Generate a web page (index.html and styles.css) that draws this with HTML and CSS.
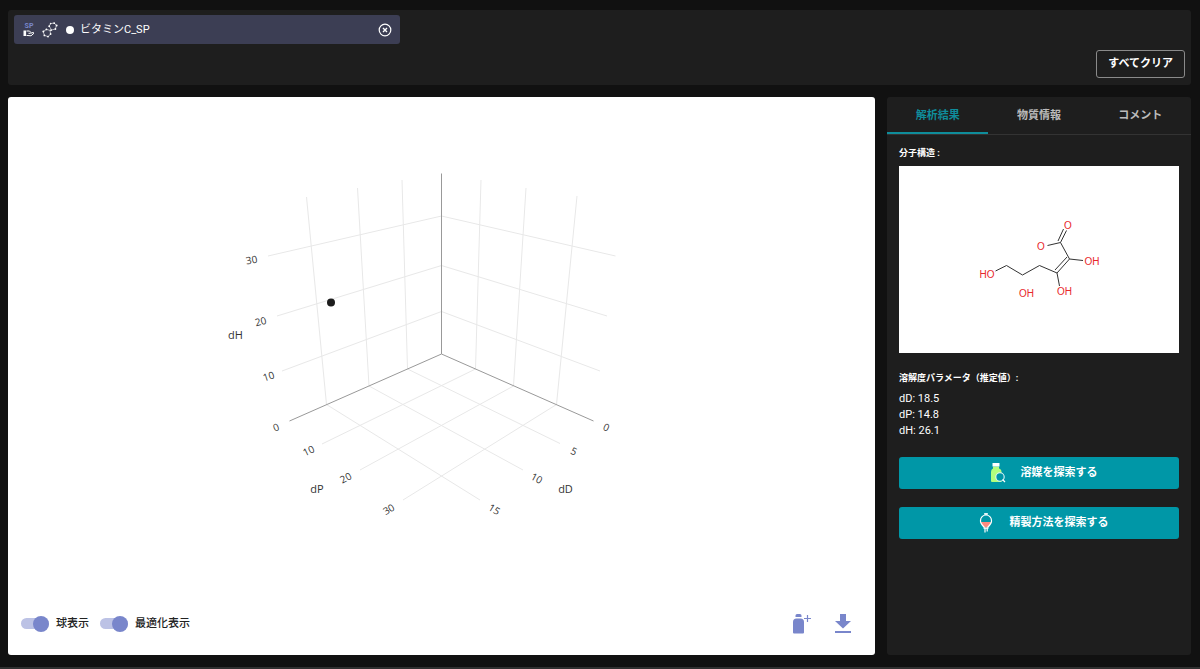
FILE: index.html
```html
<!DOCTYPE html>
<html lang="ja">
<head>
<meta charset="utf-8">
<meta name="viewport" content="width=device-width, initial-scale=1">
<title>ビタミンC_SP</title>
<link rel="stylesheet" href="styles.css">
</head>
<body>
<div class="app">
  <header class="selection">
    <div class="chip">
      <svg class="chip-hand" viewBox="0 0 12 16" aria-hidden="true">
        <text x="6" y="6" text-anchor="middle">SP</text>
        <path d="M0.5 8.500h2.600v5.500H0.500z" fill="#fff"/>
        <path d="M3.500 9h3l1.500 1.500-.8.800H5.500M7.800 11.300l2.400-.9.800.8-3 2.600-4.500-.4" fill="none" stroke="#fff" stroke-width="1"/>
      </svg>
      <svg class="chip-molecule" viewBox="0 0 16 16" aria-hidden="true">
        <path d="M7.200 4.200 8.600 1.600 12.200 1 14.400 3.400 13.400 7 9.600 8zM1.200 9.600 4.400 7.400 8 8.400 8.600 12 6 14.600 2.400 13.400z" fill="none" stroke="#fff" stroke-width=".6"/>
        <g fill="#fff"><circle cx="7.2" cy="4.2" r=".9"/><circle cx="8.600" cy="1.600" r=".8"/><circle cx="12.200" cy="1.200" r=".9"/><circle cx="14.600" cy="3.400" r="1"/><circle cx="13.400" cy="7" r=".9"/><circle cx="9" cy="8.200" r=".9"/><circle cx="4.400" cy="7.400" r=".9"/><circle cx="1.400" cy="9.600" r="1"/><circle cx="2.400" cy="13.400" r=".9"/><circle cx="6" cy="14.600" r=".9"/><circle cx="8.600" cy="12" r=".9"/></g>
      </svg>
      <span class="chip-dot"></span>
      <span class="chip-name">ビタミンC_SP</span>
      <button class="icon-button" type="button" aria-label="削除">
        <svg class="chip-close" viewBox="0 0 14 14"><g fill="none" stroke="#fff" stroke-width="1.200"><circle cx="7" cy="7" r="5.800"/><path d="m5 5 4 4m0-4L5 9" stroke-width="1.400"/></g></svg>
      </button>
    </div>
    <button class="clear" type="button">すべてクリア</button>
  </header>

  <div class="content">
    <main class="viewer">
      <svg class="plot" viewBox="8 97 867 495" role="img" aria-label="dD dP dH">
        <g class="grid">
          <path d="M306.500 197 326.500 404.500M357.500 188 369 386M402 180 407.500 369M481 180 475.500 369M526 188 513.500 386M577 196 556.500 404.500"/>
          <path d="M268 256 441.500 216 615.500 256M277 316 441.500 265.500 607 316M282 371 441.500 311.500 600 371"/>
          <path d="M475.500 369 322 444M513.500 386 360 470M556.500 404.500 403 500M407.500 369 560 443.500M369 386 523 470M326.500 404.500 480 500"/>
        </g>
        <path class="axis" d="M441.500 173.500V354M289.500 421 441.500 354 593.500 421"/>
        <circle cx="331" cy="302.500" r="4" fill="#1c1c1c"/>
        <g class="ticks">
          <text transform="translate(251.500 259.500) rotate(-10)" y="4">30</text>
          <text transform="translate(260.500 321) rotate(-14)" y="4">20</text>
          <text transform="translate(268.500 376) rotate(-18)" y="4">10</text>
          <text transform="translate(276 427) rotate(-22)" y="4">0</text>
          <text transform="translate(308.500 450.500) rotate(-26)" y="4">10</text>
          <text transform="translate(345.500 477.500) rotate(-28)" y="4">20</text>
          <text transform="translate(388.500 509) rotate(-31)" y="4">30</text>
          <text transform="translate(606.500 427) rotate(24)" y="4">0</text>
          <text transform="translate(574 451) rotate(26)" y="4">5</text>
          <text transform="translate(537 478) rotate(28)" y="4">10</text>
          <text transform="translate(494.500 509) rotate(31)" y="4">15</text>
        </g>
        <g class="axis-names"><text x="235.500" y="339">dH</text><text x="317" y="493">dP</text><text x="565.500" y="493">dD</text></g>
      </svg>
      <div class="tools">
        <label class="toggle"><input class="switch" type="checkbox" checked><span class="toggle-text">球表示</span></label>
        <label class="toggle"><input class="switch" type="checkbox" checked><span class="toggle-text">最適化表示</span></label>
        <div class="actions">
          <button class="icon-button" type="button" aria-label="溶媒を追加"><svg class="tool-icon" viewBox="0 0 20 20"><g fill="#7986cb"><path d="M3.500 3V1.500Q3.500 0 5 0h3q1.500 0 1.500 1.500V3zM1 8q0-3.500 3.500-3.500h4Q12 4.500 12 8v10.500q0 1-1 1H2q-1 0-1-1z"/></g><path d="M15.500 1v7M12 4.500h7" stroke="#7986cb" stroke-width="1.200"/></svg></button>
          <button class="icon-button" type="button" aria-label="ダウンロード"><svg class="tool-icon" viewBox="0 0 20 20"><path d="M7 0h6v7h5l-8 7.500L2 7h5zM2 17h16v2H2z" fill="#7986cb"/></svg></button>
        </div>
      </div>
    </main>

    <aside class="details">
      <div class="tabs" role="tablist">
        <button class="tab tab-active" type="button" role="tab" aria-selected="true">解析結果</button>
        <button class="tab" type="button" role="tab" aria-selected="false">物質情報</button>
        <button class="tab" type="button" role="tab" aria-selected="false">コメント</button>
      </div>
      <div class="results">
        <h2 class="heading">分子構造 :</h2>
        <svg class="molecule" viewBox="899 166 280 187" role="img" aria-label="分子構造">
          <path class="bond" d="M995.500 271 1006.500 265.500 1022.500 275 1039.500 265.500 1057 273 1069.500 259 1060.500 242.500 1047.500 245.500M1069.500 259 1083 260.500M1057 273 1059.500 286M1055 270 1067 257M1060.500 242.500 1066.500 230.500M1058 241 1063.500 229"/>
          <g class="atoms"><text x="1068" y="229">O</text><text x="1041" y="250">O</text><text x="1092" y="265">OH</text><text x="1064.500" y="295">OH</text><text x="1026.500" y="297">OH</text><text x="987" y="278">HO</text></g>
        </svg>
        <h2 class="heading">溶解度パラメータ（推定値）:</h2>
        <ul class="params"><li>dD: 18.5</li><li>dP: 14.8</li><li>dH: 26.1</li></ul>
        <button class="search" type="button">
          <svg class="search-icon" viewBox="0 0 20 20" aria-hidden="true"><path d="M6 3.500h6v2q2.500.5 2.500 3.500v10H5q-1 0-1-1V9Q4 6 6 5.500z" fill="#b2ff7d"/><path d="M5.500 0h7v3.500h-7z" fill="#fff"/><circle cx="13" cy="14" r="4.200" fill="#0097a7" stroke="#e0f7fa" stroke-width="1.100"/><path d="m15.500 16.500 2.500 2.500" stroke="#fff" stroke-width="1.200"/></svg>
          <span>溶媒を探索する</span>
        </button>
        <button class="search" type="button">
          <svg class="search-icon" viewBox="0 0 20 20" aria-hidden="true"><path d="M5 9h10q0 2-3.800 5.500H8.800Q5 11 5 9z" fill="#ff8a80"/><path d="M8 .8h4M10 0v2M8.500 14.500Q4 10 4.500 7.500a5.500 5.500 0 0 1 11 0Q16 10 11.500 14.500M7.500 15.200h5M9 15v4.500M11.200 15v3.500" fill="none" stroke="#fff" stroke-width="1.200"/></svg>
          <span>精製方法を探索する</span>
        </button>
      </div>
    </aside>
  </div>
</div>
</body>
</html>
```
FILE: styles.css
```css
* { box-sizing: border-box; }

body {
  margin: 0;
  background: #111;
  color: #fff;
  font: 11px/16px Roboto, "Noto Sans CJK JP", sans-serif;
}

button {
  margin: 0;
  padding: 0;
  border: 0;
  background: none;
  color: inherit;
  font: inherit;
  cursor: pointer;
}

svg { display: block; }

.app {
  display: flex;
  flex-direction: column;
  gap: 12px;
  min-height: 100vh;
  padding: 10px 9px 12px 8px;
  border-bottom: 2px solid #303030;
}

.selection {
  display: flex;
  flex-direction: column;
  gap: 6px;
  padding: 5px 6px 7px;
  border-radius: 3px;
  background: #1e1e1e;
}

.chip {
  display: flex;
  align-items: center;
  width: 33%;
  min-width: 240px;
  height: 29px;
  padding: 0 8px 0 9px;
  border-radius: 3px;
  background: #3c3e54;
}

.chip-hand { width: 12px; height: 16px; margin-right: 7px; }
.chip-hand text { fill: #7986cb; font-size: 7px; font-weight: 700; }
.chip-molecule { width: 16px; height: 16px; }
.chip-dot { width: 8px; height: 8px; margin: 0 6px 0 8px; border-radius: 50%; background: #fff; }
.chip-name { flex: 1; }
.chip-close { width: 14px; height: 14px; }

.clear {
  align-self: flex-end;
  height: 28px;
  padding: 0 11px;
  border: 1px solid #8a8a8a;
  border-radius: 3px;
  font-weight: 700;
}

.content {
  display: flex;
  flex: 1;
  gap: 12px;
}

.viewer {
  display: flex;
  flex: 1;
  flex-direction: column;
  min-width: 0;
  border-radius: 3px;
  background: #fff;
  color: #222;
}

.plot { flex: 1; width: 100%; min-height: 0; }
.grid { fill: none; stroke: #e8e8e8; }
.axis { fill: none; stroke: #999; }
.ticks, .axis-names { fill: #333; font-family: "Open Sans", sans-serif; text-anchor: middle; }
.ticks { font-size: 10px; }
.axis-names { font-size: 11px; }

.tools {
  display: flex;
  align-items: center;
  gap: 11px;
  height: 63px;
  padding: 0 22px 0 13px;
}

.toggle { display: flex; align-items: center; gap: 7px; }
.toggle-text { padding-top: 1px; font-weight: 500; }

.switch {
  display: flex;
  align-items: center;
  justify-content: flex-end;
  width: 28px;
  height: 11px;
  margin: 0;
  border-radius: 6px;
  background: #bcc2e5;
  appearance: none;
}

.switch::before { content: ""; width: 16px; height: 16px; flex: none; border-radius: 50%; background: #7986cb; }
.switch:not(:checked) { justify-content: flex-start; background: #ccc; }

.actions { display: flex; gap: 21px; margin-left: auto; }
.tool-icon { width: 20px; height: 20px; }

.details {
  width: 304px;
  border-radius: 3px;
  background: #1e1e1e;
}

.tabs { display: flex; border-bottom: 1px solid #333; }

.tab {
  flex: 1;
  height: 37px;
  padding-top: 2px;
  border-bottom: 2px solid transparent;
  color: #bbb;
  font-weight: 700;
}

.tab-active { border-color: #0f8d9b; color: #0f8d9b; }

.results { padding: 10px 12px; }
.heading { margin: 0; font-size: 9px; line-height: 16px; font-weight: 700; }
.molecule { width: 100%; margin: 5px 0 17px; background: #fff; }
.bond { fill: none; stroke: #333; }
.atoms { fill: #e8282b; font-size: 10px; font-family: "Liberation Sans", sans-serif; text-anchor: middle; }

.params { margin: 5px 0 18px; padding: 0; list-style: none; }

.search {
  display: flex;
  align-items: center;
  justify-content: center;
  gap: 14px;
  width: 100%;
  height: 32px;
  padding-left: 6px;
  border-radius: 3px;
  background: #0097a7;
  font-weight: 700;
}

.search + .search { margin-top: 18px; }
.search-icon { width: 20px; height: 20px; }
```
